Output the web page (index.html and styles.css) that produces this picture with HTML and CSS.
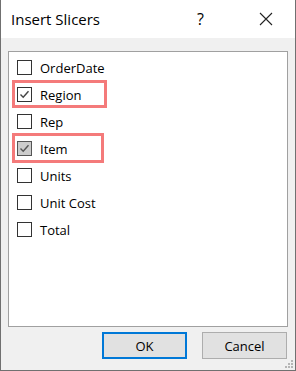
FILE: index.html
```html
<!DOCTYPE html>
<html lang="en">

<head>
    <meta charset="utf-8" />
    <meta name="viewport" content="width=device-width, initial-scale=1.0" />
    <title>Insert Slicers</title>
    <link rel="stylesheet" href="styles.css">
</head>

<body>
    <div class="dialog">
        <div class="titlebar">
            <span class="title">Insert Slicers</span>
            <span class="help">?</span>
            <span class="close">
                <svg width="14" height="14" viewBox="0 0 14 14">
                    <path d="M1 1 L13 13 M13 1 L1 13" stroke="#222" stroke-width="1.1" fill="none" />
                </svg>
            </span>
        </div>

        <div class="content">
            <div class="field-list">
                <label class="field"><span class="box"></span>OrderDate</label>
                <label class="field marked marked-region"><span class="box checked">
                        <svg width="13" height="13" viewBox="0 0 13 13">
                            <path d="M2.5 6.5 L5.2 9.2 L10.5 3.2" stroke="#444" stroke-width="1.4" fill="none" />
                        </svg>
                    </span>Region</label>
                <label class="field"><span class="box"></span>Rep</label>
                <label class="field marked marked-item"><span class="box checked dim">
                        <svg width="13" height="13" viewBox="0 0 13 13">
                            <path d="M2.5 6.5 L5.2 9.2 L10.5 3.2" stroke="#555" stroke-width="1.4" fill="none" />
                        </svg>
                    </span>Item</label>
                <label class="field"><span class="box"></span>Units</label>
                <label class="field"><span class="box"></span>Unit Cost</label>
                <label class="field"><span class="box"></span>Total</label>
            </div>

            <div class="buttons">
                <button class="btn btn-default">OK</button>
                <button class="btn">Cancel</button>
            </div>
        </div>

        <!-- resize grip in the corner -->
        <svg class="grip" width="10" height="9" viewBox="0 0 10 9">
            <rect x="7" y="0" width="2" height="2" fill="#b5b5b5" />
            <rect x="4" y="3" width="2" height="2" fill="#b5b5b5" />
            <rect x="7" y="3" width="2" height="2" fill="#b5b5b5" />
            <rect x="1" y="6" width="2" height="2" fill="#b5b5b5" />
            <rect x="4" y="6" width="2" height="2" fill="#b5b5b5" />
            <rect x="7" y="6" width="2" height="2" fill="#b5b5b5" />
        </svg>
    </div>
</body>

</html>
```

FILE: styles.css
```css
html {
    font-family: "Open Sans", "Noto Sans", sans-serif;
    color: #000;
}

body {
    margin: 0;
}

.dialog {
    position: relative;
    width: 296px;
    height: 371px;
    box-sizing: border-box;
    border: 1px solid #707070;
    border-top: none;
    background: #f0f0f0;
    display: flex;
    flex-direction: column;
}

.titlebar {
    height: 38px;
    background: #fff;
    display: flex;
    align-items: center;
    padding-left: 10px;
}

.title {
    font-size: 15px;
    flex: 1;
}

.help {
    font-size: 16px;
    width: 16px;
    margin-right: 46px;
}

.close {
    display: flex;
    margin-right: 22px;
}

.content {
    flex: 1;
    padding: 13px 7px 0 7px;
}

.field-list {
    height: 276px;
    box-sizing: border-box;
    border: 1px solid #a0a0a0;
    background: #fff;
    padding: 2px 0 0 8px;
}

.field {
    position: relative;
    height: 27px;
    display: flex;
    align-items: center;
    font-size: 13px;
}

.box {
    width: 15px;
    height: 15px;
    box-sizing: border-box;
    border: 1px solid #333;
    background: #fff;
    margin-right: 8px;
    display: flex;
    align-items: center;
    justify-content: center;
}

.box.dim {
    background: #cccccc;
    border-color: #555;
}

/* red annotation frames drawn over the rows */
.marked::before {
    content: "";
    position: absolute;
    left: -5px;
    border: 3px solid #f47a7a;
    box-sizing: border-box;
}

.marked-region::before {
    top: -1px;
    width: 95px;
    height: 28px;
}

.marked-item::before {
    top: -2px;
    width: 92px;
    height: 30px;
}

.buttons {
    display: flex;
    justify-content: flex-end;
    gap: 15px;
    margin-top: 5px;
    padding-right: 1px;
}

.btn {
    width: 85px;
    height: 27px;
    box-sizing: border-box;
    border: 1px solid #adadad;
    background: #e1e1e1;
    font-family: inherit;
    font-size: 13px;
    color: #000;
    padding: 0;
}

.btn-default {
    border: 2px solid #0078d7;
}

.grip {
    position: absolute;
    right: 1px;
    bottom: 1px;
}
```
